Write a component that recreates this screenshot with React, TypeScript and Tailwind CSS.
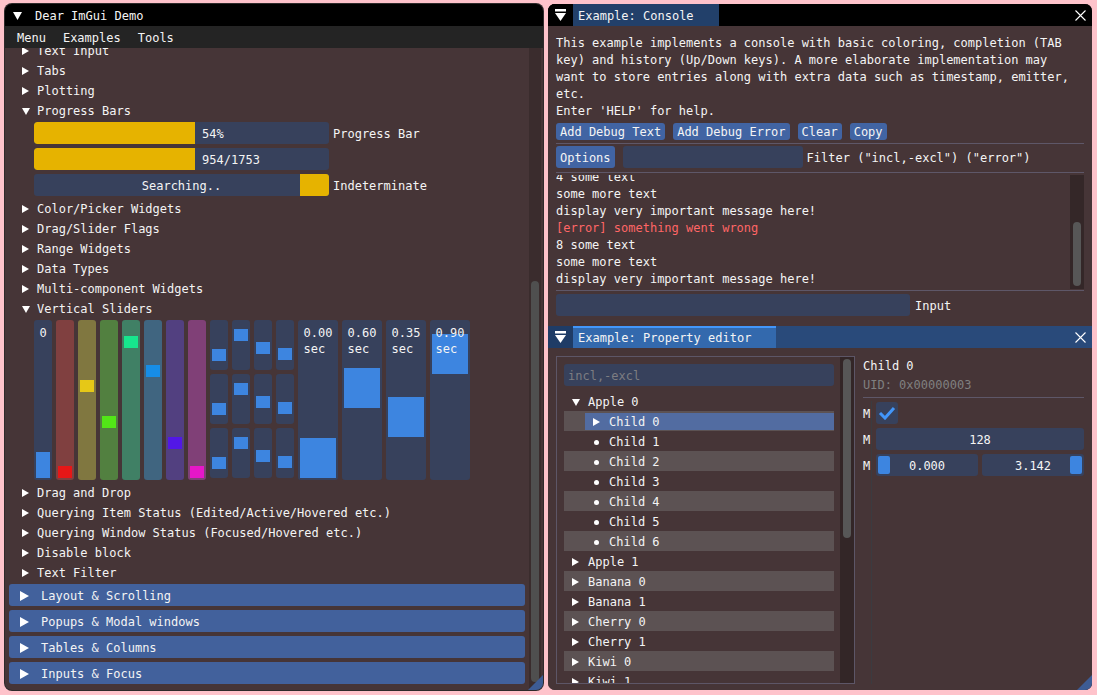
import React from "react";

// text sits 1px lower than the font's natural centre in the reference
const TX = "relative top-[1px]";

// ---------- small drawings ----------
function TriRight({ big = false }: { big?: boolean }) {
  return big ? (
    <svg width="9" height="10" viewBox="0 0 9 10" className="shrink-0">
      <polygon points="0,0 9,5 0,10" fill="#ffffff" />
    </svg>
  ) : (
    <svg width="7" height="8" viewBox="0 0 7 8" className="shrink-0">
      <polygon points="0,0 7,4 0,8" fill="#ffffff" />
    </svg>
  );
}

function TriDown() {
  return (
    <svg width="8" height="7" viewBox="0 0 8 7" className="shrink-0">
      <polygon points="0,0 8,0 4,7" fill="#ffffff" />
    </svg>
  );
}

function DockMenuIcon() {
  return (
    <svg width="11" height="12" viewBox="0 0 11 12">
      <rect x="0" y="0" width="11" height="2.5" fill="#ffffff" />
      <polygon points="0,4 11,4 5.5,12" fill="#ffffff" />
    </svg>
  );
}

function CloseX() {
  return (
    <svg width="11" height="11" viewBox="0 0 11 11">
      <path d="M0.5 0.5 L10.5 10.5 M10.5 0.5 L0.5 10.5" stroke="#ffffff" strokeWidth="1.1" />
    </svg>
  );
}

function ResizeGrip() {
  return (
    <svg width="15" height="15" viewBox="0 0 15 15" className="absolute bottom-0 right-0">
      <polygon points="15,0 15,15 0,15" fill="#3d5c95" />
    </svg>
  );
}

// ---------- left window pieces ----------
function TreeNode({ label, open = false }: { label: string; open?: boolean }) {
  return (
    <div className="flex h-[16px] items-center pl-[13px] pt-[2px]">
      <span className="flex w-[15px] items-center">{open ? <TriDown /> : <TriRight />}</span>
      <span className="whitespace-pre">{label}</span>
    </div>
  );
}

function Header({ label }: { label: string }) {
  return (
    <div className="flex h-[22px] items-center rounded-[3px] bg-[#42619c] pl-[11px] pt-[2px]">
      <TriRight big />
      <span className="ml-[12px]">{label}</span>
    </div>
  );
}

function ProgressRow({ frac, text, label }: { frac: number; text: string; label?: string }) {
  return (
    <div className="flex items-center gap-[4px] pl-[25px]">
      <div className="flex h-[22px] w-[295px] items-center overflow-hidden rounded-[3px] bg-[#37415c]">
        <div className="h-full rounded-l-[3px] bg-[#e6b300]" style={{ width: `${frac * 295}px` }} />
        <span className={`ml-[7px] ${TX}`}>{text}</span>
      </div>
      {label && <span className={TX}>{label}</span>}
    </div>
  );
}

function IndeterminateRow() {
  return (
    <div className="flex items-center gap-[4px] pl-[25px]">
      <div className="relative flex h-[22px] w-[295px] items-center justify-center rounded-[3px] bg-[#37415c]">
        <div className="absolute right-0 top-0 h-full w-[29px] rounded-r-[3px] bg-[#e6b300]" />
        <span className={TX}>Searching..</span>
      </div>
      <span className={TX}>Indeterminate</span>
    </div>
  );
}

type VS = { w: string; h: number; bg: string; grab: string; gw: string; gh: number; v: number; text?: string[] };

function VSlider({ s }: { s: VS }) {
  const top = 2 + (1 - s.v) * (s.h - 4 - s.gh);
  return (
    <div className={`relative shrink-0 rounded-[3px] ${s.w} ${s.bg}`} style={{ height: `${s.h}px` }}>
      <div className={`absolute left-[2px] ${s.gw} ${s.grab}`} style={{ top: `${top}px`, height: `${s.gh}px` }} />
      {s.text && (
        <div className="relative flex justify-center pt-[5px] leading-[16px]">
          <div>
            {s.text.map((t) => (
              <div key={t}>{t}</div>
            ))}
          </div>
        </div>
      )}
    </div>
  );
}

const colored: VS[] = [
  { w: "w-[18px]", h: 160, bg: "bg-[#804040]", grab: "bg-[#e61717]", gw: "w-[14px]", gh: 12, v: 0 },
  { w: "w-[18px]", h: 160, bg: "bg-[#807740]", grab: "bg-[#e6c817]", gw: "w-[14px]", gh: 12, v: 0.6 },
  { w: "w-[18px]", h: 160, bg: "bg-[#528040]", grab: "bg-[#52e617]", gw: "w-[14px]", gh: 12, v: 0.35 },
  { w: "w-[18px]", h: 160, bg: "bg-[#408065]", grab: "bg-[#17e68d]", gw: "w-[14px]", gh: 12, v: 0.9 },
  { w: "w-[18px]", h: 160, bg: "bg-[#406580]", grab: "bg-[#178de6]", gw: "w-[14px]", gh: 12, v: 0.7 },
  { w: "w-[18px]", h: 160, bg: "bg-[#524080]", grab: "bg-[#5217e6]", gw: "w-[14px]", gh: 12, v: 0.2 },
  { w: "w-[18px]", h: 160, bg: "bg-[#804077]", grab: "bg-[#e617c8]", gw: "w-[14px]", gh: 12, v: 0 },
];

const smallVals = [0.2, 0.8, 0.4, 0.25];
const bigVals = [
  { v: 0, t: "0.00" },
  { v: 0.6, t: "0.60" },
  { v: 0.35, t: "0.35" },
  { v: 0.9, t: "0.90" },
];

function SliderBlock() {
  return (
    <div className="flex items-start gap-[4px] pl-[25px]">
      <VSlider s={{ w: "w-[18px]", h: 160, bg: "bg-[#37415c]", grab: "bg-[#3d85e0]", gw: "w-[14px]", gh: 26, v: 0, text: ["0"] }} />
      {colored.map((s, i) => (
        <VSlider key={i} s={s} />
      ))}
      {smallVals.map((v, i) => (
        <div key={i} className="flex flex-col gap-[4px]">
          {[0, 1, 2].map((r) => (
            <VSlider key={r} s={{ w: "w-[18px]", h: 50, bg: "bg-[#37415c]", grab: "bg-[#3d85e0]", gw: "w-[14px]", gh: 12, v }} />
          ))}
        </div>
      ))}
      {bigVals.map((b) => (
        <VSlider key={b.t} s={{ w: "w-[40px]", h: 160, bg: "bg-[#37415c]", grab: "bg-[#3d85e0]", gw: "w-[36px]", gh: 40, v: b.v, text: [b.t, "sec"] }} />
      ))}
    </div>
  );
}

function DemoWindow() {
  return (
    <div className="relative flex h-[686px] w-[538px] shrink-0 flex-col overflow-hidden rounded-[7px] bg-[#463537] ring-1 ring-[#2e2a2b]">
      <div className="flex h-[22px] shrink-0 items-center bg-black pl-[8px] pt-[2px]">
        <svg width="9" height="8" viewBox="0 0 9 8">
          <polygon points="0,0 9,0 4.5,8" fill="#ffffff" />
        </svg>
        <span className="ml-[13px]">Dear ImGui Demo</span>
      </div>
      <div className="flex h-[22px] shrink-0 items-center gap-[17px] bg-[#242424] pl-[12px] pt-[2px]">
        <span>Menu</span>
        <span>Examples</span>
        <span>Tools</span>
      </div>
      <div className="flex min-h-0 flex-1">
        <div className="w-[524px] overflow-hidden px-[4px]">
          <div className="-mt-[6px] flex flex-col gap-[4px]">
            {["Text Input", "Tabs", "Plotting"].map((l) => (
              <TreeNode key={l} label={l} />
            ))}
            <TreeNode label="Progress Bars" open />
            <ProgressRow frac={0.546} text="54%" label="Progress Bar" />
            <ProgressRow frac={0.546} text="954/1753" />
            <IndeterminateRow />
            {["Color/Picker Widgets", "Drag/Slider Flags", "Range Widgets", "Data Types", "Multi-component Widgets"].map((l) => (
              <TreeNode key={l} label={l} />
            ))}
            <TreeNode label="Vertical Sliders" open />
            <SliderBlock />
            {[
              "Drag and Drop",
              "Querying Item Status (Edited/Active/Hovered etc.)",
              "Querying Window Status (Focused/Hovered etc.)",
              "Disable block",
              "Text Filter",
            ].map((l) => (
              <TreeNode key={l} label={l} />
            ))}
            {["Layout & Scrolling", "Popups & Modal windows", "Tables & Columns", "Inputs & Focus"].map((l) => (
              <Header key={l} label={l} />
            ))}
          </div>
        </div>
        <div className="w-[12px] bg-[#3a2c2d]">
          <div className="ml-[2px] mt-[233px] h-[401px] w-[8px] rounded-full bg-[#4f4f4f]" />
        </div>
      </div>
      <ResizeGrip />
    </div>
  );
}

// ---------- docked windows ----------
function DockTitle({ title, active }: { title: string; active: boolean }) {
  return (
    <div className={`flex h-[22px] shrink-0 items-stretch ${active ? "bg-[#294a7a]" : "bg-black"}`}>
      <div className={`flex w-[25px] items-center justify-center ${active ? "bg-[#1f3c66]" : "bg-black"}`}>
        <DockMenuIcon />
      </div>
      <div
        className={`flex items-center pl-[5px] pr-[25px] ${
          active ? "border-t-2 border-[#4296fa] bg-[#3369ad]" : "bg-[#22406a] pt-[2px]"
        }`}
      >
        {title}
      </div>
      <div className="ml-auto flex w-[24px] items-center justify-center">
        <CloseX />
      </div>
    </div>
  );
}

function SmallButton({ label }: { label: string }) {
  return (
    <div className="flex h-[17px] items-center rounded-[3px] bg-[#4164a3] px-[4px]">
      <span className={TX}>{label}</span>
    </div>
  );
}

const logLines = [
  { t: "4 some text" },
  { t: "some more text" },
  { t: "display very important message here!" },
  { t: "[error] something went wrong", err: true },
  { t: "8 some text" },
  { t: "some more text" },
  { t: "display very important message here!" },
];

function ConsoleWindow() {
  return (
    <div className="flex h-[320px] shrink-0 flex-col overflow-hidden rounded-t-[7px] bg-[#463537]">
      <DockTitle title="Example: Console" active={false} />
      <div className="flex flex-col px-[8px]">
        <p className={`mt-[8px] w-[520px] ${TX}`}>
          This example implements a console with basic coloring, completion (TAB key) and history (Up/Down keys). A more
          elaborate implementation may want to store entries along with extra data such as timestamp, emitter, etc.
        </p>
        <p className={TX}>Enter 'HELP' for help.</p>
        <div className="mt-[4px] flex gap-[8px]">
          <SmallButton label="Add Debug Text" />
          <SmallButton label="Add Debug Error" />
          <SmallButton label="Clear" />
          <SmallButton label="Copy" />
        </div>
        <div className="mt-[3px] h-px bg-[#5e5768]" />
        <div className="mt-[2px] flex h-[22px] items-center">
          <div className="flex h-full items-center rounded-[3px] bg-[#4164a3] px-[4px]">
            <span className={TX}>Options</span>
          </div>
          <div className="ml-[8px] h-full w-[180px] rounded-[3px] bg-[#37415c]" />
          <span className={`ml-[4px] ${TX}`}>Filter ("incl,-excl") ("error")</span>
        </div>
        <div className="mt-[4px] h-px bg-[#5e5768]" />
        <div className="mt-[2px] flex h-[114px]">
          <div className="flex-1 overflow-hidden">
            <div className="-mt-[6px]">
              {logLines.map((l, i) => (
                <div key={i} className={l.err ? "text-[#ff6666]" : ""}>
                  {l.t}
                </div>
              ))}
            </div>
          </div>
          <div className="w-[14px] bg-[#342728]">
            <div className="ml-[3px] mt-[47px] h-[64px] w-[8px] rounded-full bg-[#575757]" />
          </div>
        </div>
        <div className="mt-[1px] h-px bg-[#5e5768]" />
        <div className="mt-[3px] flex h-[22px] items-center">
          <div className="h-full w-[354px] rounded-[3px] bg-[#37415c]" />
          <span className={`ml-[5px] ${TX}`}>Input</span>
        </div>
      </div>
    </div>
  );
}

type PRow = { label: string; depth: number; kind: "open" | "closed" | "leaf"; selected?: boolean };

const propRows: PRow[] = [
  { label: "Apple 0", depth: 0, kind: "open" },
  { label: "Child 0", depth: 1, kind: "closed", selected: true },
  { label: "Child 1", depth: 1, kind: "leaf" },
  { label: "Child 2", depth: 1, kind: "leaf" },
  { label: "Child 3", depth: 1, kind: "leaf" },
  { label: "Child 4", depth: 1, kind: "leaf" },
  { label: "Child 5", depth: 1, kind: "leaf" },
  { label: "Child 6", depth: 1, kind: "leaf" },
  { label: "Apple 1", depth: 0, kind: "closed" },
  { label: "Banana 0", depth: 0, kind: "closed" },
  { label: "Banana 1", depth: 0, kind: "closed" },
  { label: "Cherry 0", depth: 0, kind: "closed" },
  { label: "Cherry 1", depth: 0, kind: "closed" },
  { label: "Kiwi 0", depth: 0, kind: "closed" },
  { label: "Kiwi 1", depth: 0, kind: "closed" },
];

function PropTreeRow({ r, stripe }: { r: PRow; stripe: boolean }) {
  const icon =
    r.kind === "open" ? <TriDown /> : r.kind === "closed" ? <TriRight /> : <span className="ml-[1px] h-[5px] w-[5px] rounded-full bg-white" />;
  return (
    <div className={`flex h-[20px] w-[270px] shrink-0 items-center ${stripe ? "bg-[#5c5253]" : ""}`}>
      <div
        className={`flex h-[17px] flex-1 items-center pl-[8px] pt-[2px] ${r.depth === 1 ? "ml-[21px]" : ""} ${
          r.selected ? "bg-[#526ca1]" : ""
        }`}
      >
        <span className="flex w-[16px] items-center">{icon}</span>
        <span>{r.label}</span>
      </div>
    </div>
  );
}

function PropertyWindow() {
  return (
    <div className="relative flex h-[364px] shrink-0 flex-col overflow-hidden rounded-b-[7px] bg-[#463537]">
      <DockTitle title="Example: Property editor" active />
      <div className="flex px-[8px] pt-[8px]">
        <div className="flex h-[328px] w-[299px] shrink-0 border border-[#5d5667]">
          <div className="flex flex-1 flex-col overflow-hidden pl-[7px] pt-[7px]">
            <div className="flex h-[22px] w-[270px] shrink-0 items-center rounded-[3px] bg-[#37415c] pl-[4px] text-[#7d7d82]">
              <span className={TX}>incl,-excl</span>
            </div>
            <div className="mt-[5px] flex flex-col">
              {propRows.map((r, i) => (
                <PropTreeRow key={r.label} r={r} stripe={i % 2 === 1} />
              ))}
            </div>
          </div>
          <div className="w-[14px] bg-[#332627]">
            <div className="ml-[3px] mt-[2px] h-[179px] w-[8px] rounded-full bg-[#575757]" />
          </div>
        </div>
        <div className="ml-[8px] flex h-[328px] flex-1 flex-col">
          <div className="flex h-[18px] items-center">
            <span className={TX}>Child 0</span>
          </div>
          <div className="mt-[1px] flex h-[18px] items-center text-[#808080]">
            <span className={TX}>UID: 0x00000003</span>
          </div>
          <div className="mt-[4px] h-px bg-[#5e5768]" />
          <div className="mt-[4px] flex flex-1">
            <div className="flex w-[8px] flex-col gap-[4px]">
              {["M", "M", "M"].map((m, i) => (
                <div key={i} className="flex h-[22px] items-center">
                  <span className={TX}>{m}</span>
                </div>
              ))}
            </div>
            <div className="-mt-[1px] flex flex-1 flex-col gap-[4px] border-l border-[#3b3b40] pl-[4px] pt-[1px]">
              <div className="flex h-[22px] w-[22px] items-center justify-center rounded-[3px] bg-[#37415c]">
                <svg width="18" height="14" viewBox="0 0 18 14">
                  <polyline points="2,7 7,12 16,2" fill="none" stroke="#4296fa" strokeWidth="3" />
                </svg>
              </div>
              <div className="flex h-[22px] items-center justify-center rounded-[3px] bg-[#37415c]">
                <span className={TX}>128</span>
              </div>
              <div className="flex h-[22px] gap-[4px]">
                <div className="relative flex w-[102px] items-center justify-center rounded-[3px] bg-[#37415c]">
                  <div className="absolute bottom-[2px] left-[2px] top-[2px] w-[12px] rounded-[2px] bg-[#3d85e0]" />
                  <span className={TX}>0.000</span>
                </div>
                <div className="relative flex w-[102px] items-center justify-center rounded-[3px] bg-[#37415c]">
                  <div className="absolute bottom-[2px] right-[2px] top-[2px] w-[12px] rounded-[2px] bg-[#3d85e0]" />
                  <span className={TX}>3.142</span>
                </div>
              </div>
            </div>
          </div>
        </div>
      </div>
      <ResizeGrip />
    </div>
  );
}

export default function App() {
  return (
    <div className="flex h-[695px] w-full gap-[5px] overflow-hidden bg-[#fec3cb] pl-[5px] pt-[4px] font-['DejaVu_Sans_Mono',monospace] text-[12px] leading-[17px] text-[#f4f4f4]">
      <DemoWindow />
      <div className="flex h-[686px] w-[544px] shrink-0 flex-col gap-[2px] rounded-[7px] bg-[#463537]">
        <ConsoleWindow />
        <PropertyWindow />
      </div>
    </div>
  );
}
